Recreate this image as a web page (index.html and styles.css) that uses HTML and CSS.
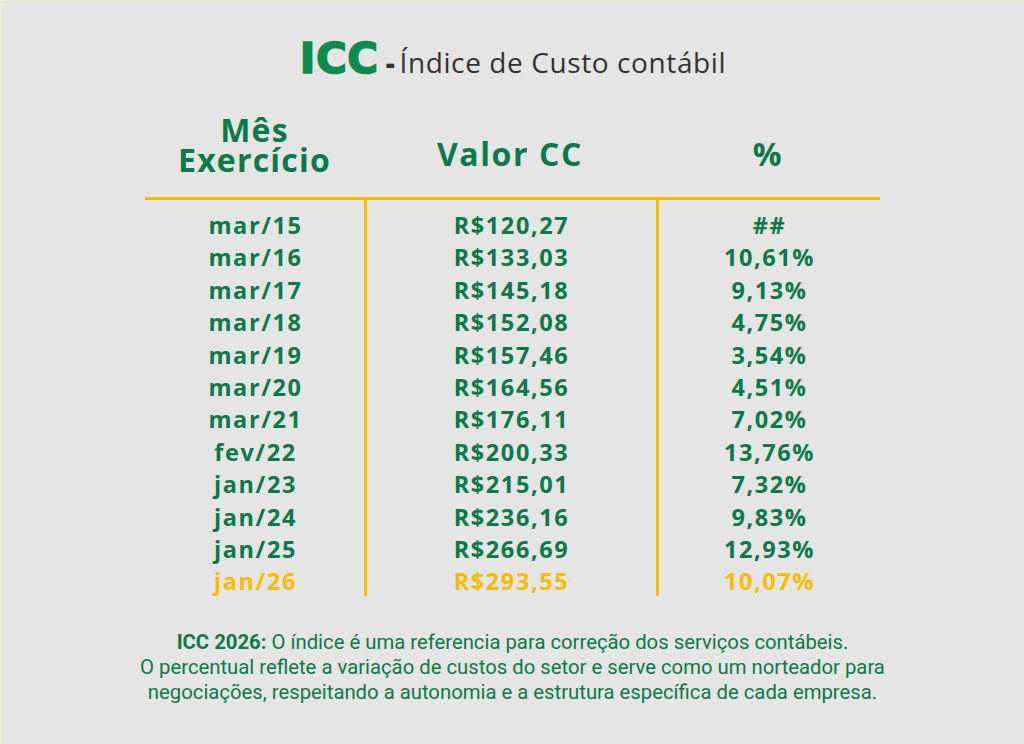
FILE: index.html
```html
<!DOCTYPE html>
<html lang="pt-BR">
<head>
<meta charset="utf-8">
<link rel="stylesheet" href="styles.css">
</head>
<body>
<div class="page">
  <h1 class="title"><span class="logo">ICC</span><span class="dash">-</span><span class="sub">Índice de Custo contábil</span></h1>
  <div class="table">
    <div class="head">
      <div class="hcell first">Mês<br>Exercício</div>
      <div class="hcell">Valor CC</div>
      <div class="hcell">%</div>
    </div>
    <div class="body">
      <div class="col">
        <div>mar/15</div><div>mar/16</div><div>mar/17</div><div>mar/18</div><div>mar/19</div><div>mar/20</div><div>mar/21</div><div>fev/22</div><div>jan/23</div><div>jan/24</div><div>jan/25</div><div class="hl">jan/26</div>
      </div>
      <div class="col sep">
        <div>R$120,27</div><div>R$133,03</div><div>R$145,18</div><div>R$152,08</div><div>R$157,46</div><div>R$164,56</div><div>R$176,11</div><div>R$200,33</div><div>R$215,01</div><div>R$236,16</div><div>R$266,69</div><div class="hl">R$293,55</div>
      </div>
      <div class="col sep">
        <div>##</div><div>10,61%</div><div>9,13%</div><div>4,75%</div><div>3,54%</div><div>4,51%</div><div>7,02%</div><div>13,76%</div><div>7,32%</div><div>9,83%</div><div>12,93%</div><div class="hl">10,07%</div>
      </div>
    </div>
  </div>
  <div class="note">
    <p><b>ICC 2026:</b> O índice é uma referencia para correção dos serviços contábeis.</p>
    <p>O percentual reflete a variação de custos do setor e serve como um norteador para</p>
    <p>negociações, respeitando a autonomia e a estrutura específica de cada empresa.</p>
  </div>
</div>
</body>
</html>
```
FILE: styles.css
```css
html, body {
  margin: 0;
  padding: 0;
}
body {
  background: #e5e5e5;
}
.page {
  width: 1024px;
  height: 744px;
  box-sizing: border-box;
  border-top: 1px solid #f3ead0;
  border-left: 1px solid #f3ead0;
  background: #e5e5e5;
  display: flex;
  flex-direction: column;
  align-items: center;
  overflow: hidden;
}
.title {
  margin: 0;
  padding-top: 37px;
  height: 49px;
  display: flex;
  align-items: baseline;
  font-weight: normal;
  line-height: 1;
  margin-left: 1px;
}
.logo {
  font-family: "DejaVu Sans", sans-serif;
  font-weight: 700;
  font-size: 42px;
  color: #0d8a4e;
  -webkit-text-stroke: 1.6px #0d8a4e;
  letter-spacing: 0.5px;
}
.dash {
  font-family: "Open Sans", sans-serif;
  font-weight: 800;
  font-size: 28px;
  color: #333333;
  margin: 0 5px 0 7px;
}
.sub {
  font-family: "Open Sans", sans-serif;
  font-size: 28px;
  color: #333333;
  letter-spacing: 0.6px;
}
.table {
  width: 735px;
  margin-top: 25px;
  font-family: "Open Sans", sans-serif;
  color: #0b7a4a;
}
.head {
  display: grid;
  grid-template-columns: 219px 292px 224px;
  height: 85px;
  border-bottom: 3px solid #f7bb00;
  align-items: center;
}
.hcell {
  text-align: center;
  font-weight: 700;
  font-size: 32px;
  line-height: 30px;
  letter-spacing: 1.6px;
  padding-bottom: 2px;
}
.hcell.first {
  padding-bottom: 20px;
  letter-spacing: 1.2px;
}
.body {
  display: grid;
  grid-template-columns: 219px 292px 224px;
}
.col {
  display: flex;
  flex-direction: column;
  align-items: center;
  padding: 9px 0 0;
  height: 396px;
  box-sizing: border-box;
  font-weight: 700;
  font-size: 23.5px;
  line-height: 32.4px;
  letter-spacing: 1.6px;
}
.col:first-child {
  padding-left: 2px;
}
.sep {
  border-left: 3px solid #f7bb00;
}
.hl {
  color: #f7bb00;
}
.note {
  margin-top: 34px;
  text-align: center;
  font-family: "Roboto", sans-serif;
  font-size: 20.3px;
  line-height: 25px;
  color: #0b7a4a;
}
.note p {
  margin: 0;
}
```
